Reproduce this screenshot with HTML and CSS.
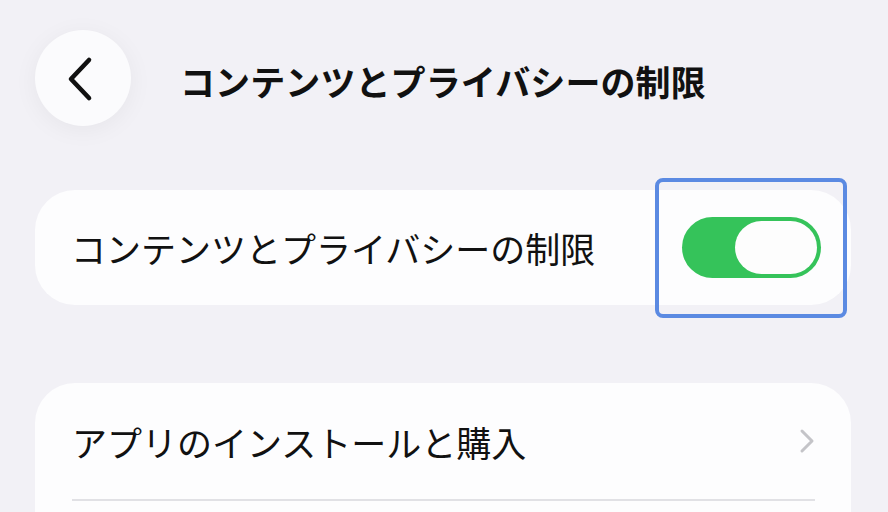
FILE: index.html
```html
<!DOCTYPE html>
<html lang="ja">
<head>
<meta charset="utf-8">
<link rel="stylesheet" href="styles.css">
</head>
<body>
<div class="page">
  <header class="nav">
    <div class="back">
      <svg width="30" height="46" viewBox="0 0 30 46"><path d="M24 4 L6 23 L24 42" fill="none" stroke="#111" stroke-width="4.6" stroke-linecap="round" stroke-linejoin="round"/></svg>
    </div>
    <h1 class="title">コンテンツとプライバシーの制限</h1>
  </header>

  <section class="card card-toggle">
    <div class="row">
      <span class="label">コンテンツとプライバシーの制限</span>
      <div class="switch-wrap">
        <div class="switch"><div class="knob"></div></div>
        <div class="focus-ring"></div>
      </div>
    </div>
  </section>

  <section class="card card-list">
    <div class="row row-link">
      <span class="label">アプリのインストールと購入</span>
      <svg class="chev" width="16" height="26" viewBox="0 0 16 26"><path d="M3 3 L13 13 L3 23" fill="none" stroke="#c4c4c8" stroke-width="3" stroke-linecap="round" stroke-linejoin="round"/></svg>
    </div>
    <div class="sep"></div>
  </section>
</div>
</body>
</html>
```
FILE: styles.css
```css
html, body {
  margin: 0;
  padding: 0;
  background: #f2f1f6;
  font-family: "Noto Sans CJK JP", "Noto Sans", sans-serif;
  color: #111;
  overflow: hidden;
}
.page {
  width: 888px;
  height: 512px;
  padding: 30px 37px 0 35px;
  box-sizing: border-box;
  overflow: hidden;
}
.nav {
  display: flex;
  align-items: center;
  gap: 49px;
  height: 96px;
}
.back {
  width: 96px;
  height: 96px;
  border-radius: 50%;
  background: #fbfbfd;
  box-shadow: 0 4px 24px rgba(0,0,0,0.05);
  display: flex;
  align-items: center;
  justify-content: center;
  flex-shrink: 0;
}
.back svg { margin-left: -6px; margin-top: 2px; }
.title {
  margin: 0;
  font-size: 35px;
  font-weight: 700;
  letter-spacing: 0.1px;
  line-height: 1;
  margin-top: 4px;
}
.card {
  background: #fdfdfe;
  border-radius: 40px;
}
.card-toggle {
  margin-top: 64px;
  height: 115px;
}
.row {
  display: flex;
  align-items: center;
  justify-content: space-between;
  padding: 0 30px 0 36px;
  height: 100%;
  box-sizing: border-box;
}
.label {
  font-size: 35px;
  font-weight: 400;
  line-height: 1;
}
.switch-wrap {
  position: relative;
}
.switch {
  width: 139px;
  height: 61px;
  border-radius: 31px;
  background: #35c35a;
  position: relative;
}
.knob {
  position: absolute;
  right: 4px;
  top: 4px;
  width: 82px;
  height: 53px;
  border-radius: 27px;
  background: #fdfdfd;
}
.focus-ring {
  position: absolute;
  left: -27px;
  top: -39px;
  width: 184px;
  height: 132px;
  border: 4px solid #5b8ae2;
  border-radius: 8px;
}
.card-list {
  margin-top: 78px;
  height: 200px;
  padding: 0 36px 0 37px;
}
.row-link {
  height: 116px;
  padding: 0;
}
.sep {
  height: 2px;
  background: #e1e1e5;
}
```
